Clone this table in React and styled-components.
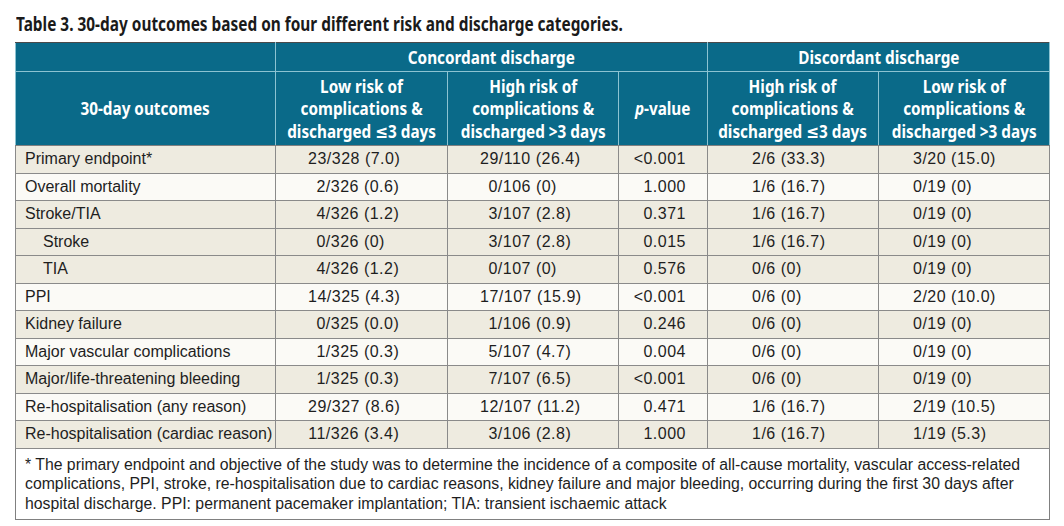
import React from 'react'
import styled, { createGlobalStyle } from 'styled-components'

const GlobalStyle = createGlobalStyle`
  body {
    margin: 0;
    background: #ffffff;
    font-family: 'Liberation Sans', Arial, sans-serif;
    color: #1e1e1e;
  }
`

const rows = [
  { label: 'Primary endpoint*', shade: true, c: ['23/328 (7.0)', '29/110 (26.4)', '<0.001', '2/6 (33.3)', '3/20 (15.0)'] },
  { label: 'Overall mortality', c: ['2/326 (0.6)', '0/106 (0)', '1.000', '1/6 (16.7)', '0/19 (0)'] },
  { label: 'Stroke/TIA', shade: true, c: ['4/326 (1.2)', '3/107 (2.8)', '0.371', '1/6 (16.7)', '0/19 (0)'] },
  { label: 'Stroke', indent: true, shade: true, c: ['0/326 (0)', '3/107 (2.8)', '0.015', '1/6 (16.7)', '0/19 (0)'] },
  { label: 'TIA', indent: true, shade: true, c: ['4/326 (1.2)', '0/107 (0)', '0.576', '0/6 (0)', '0/19 (0)'] },
  { label: 'PPI', c: ['14/325 (4.3)', '17/107 (15.9)', '<0.001', '0/6 (0)', '2/20 (10.0)'] },
  { label: 'Kidney failure', shade: true, c: ['0/325 (0.0)', '1/106 (0.9)', '0.246', '0/6 (0)', '0/19 (0)'] },
  { label: 'Major vascular complications', c: ['1/325 (0.3)', '5/107 (4.7)', '0.004', '0/6 (0)', '0/19 (0)'] },
  { label: 'Major/life-threatening bleeding', shade: true, c: ['1/325 (0.3)', '7/107 (6.5)', '<0.001', '0/6 (0)', '0/19 (0)'] },
  { label: 'Re-hospitalisation (any reason)', c: ['29/327 (8.6)', '12/107 (11.2)', '0.471', '1/6 (16.7)', '2/19 (10.5)'] },
  { label: 'Re-hospitalisation (cardiac reason)', shade: true, c: ['11/326 (3.4)', '3/106 (2.8)', '1.000', '1/6 (16.7)', '1/19 (5.3)'] },
]

const Count = ({ value }) => {
  const [num, rest] = value.split('/')
  return (
    <>
      <Num>{num}</Num>/{rest}
    </>
  )
}

const App = () => (
  <Page>
    <GlobalStyle />
    <Title>
      <TitleText>Table 3. 30-day outcomes based on four different risk and discharge categories.</TitleText>
    </Title>
    <Table>
      <colgroup>
        <col style={{ width: 260 }} />
        <col style={{ width: 172 }} />
        <col style={{ width: 171 }} />
        <col style={{ width: 89 }} />
        <col style={{ width: 171 }} />
        <col style={{ width: 171 }} />
      </colgroup>
      <thead>
        <tr>
          <GroupHead />
          <GroupHead colSpan={3}><HeadText>Concordant discharge</HeadText></GroupHead>
          <GroupHead colSpan={2}><HeadText>Discordant discharge</HeadText></GroupHead>
        </tr>
        <tr>
          <ColHead><HeadText>30-day outcomes</HeadText></ColHead>
          <ColHead><HeadText>Low risk of<br />complications &amp;<br />discharged ≤3 days</HeadText></ColHead>
          <ColHead><HeadText>High risk of<br />complications &amp;<br />discharged &gt;3 days</HeadText></ColHead>
          <ColHead><HeadText><i>p</i>-value</HeadText></ColHead>
          <ColHead><HeadText>High risk of<br />complications &amp;<br />discharged ≤3 days</HeadText></ColHead>
          <ColHead><HeadText>Low risk of<br />complications &amp;<br />discharged &gt;3 days</HeadText></ColHead>
        </tr>
      </thead>
      <tbody>
        {rows.map(r => (
          <Row key={r.label} $shade={r.shade}>
            <Label $indent={r.indent}>{r.label}</Label>
            <Cell $pad={32}><Count value={r.c[0]} /></Cell>
            <Cell $pad={32}><Count value={r.c[1]} /></Cell>
            <PCell>{r.c[2]}</PCell>
            <Cell $pad={44}>{r.c[3]}</Cell>
            <Cell $pad={34}>{r.c[4]}</Cell>
          </Row>
        ))}
        <tr>
          <Note colSpan={6}>
            <span>* The primary endpoint and objective of the study was to determine the incidence of a composite of all-cause mortality, vascular access-related</span>
            <span>complications, PPI, stroke, re-hospitalisation due to cardiac reasons, kidney failure and major bleeding, occurring during the first 30 days after</span>
            <span>hospital discharge. PPI: permanent pacemaker implantation; TIA: transient ischaemic attack</span>
          </Note>
        </tr>
      </tbody>
    </Table>
  </Page>
)

export default App

// no condensed face is installed, so the bold sans is squeezed horizontally
const condensed = `
  font-family: 'Noto Sans', 'DejaVu Sans', sans-serif;
  font-weight: bold;
`

const Page = styled.div`
  width: 1064px;
  height: 526px;
  padding: 14px 15px 0;
  box-sizing: border-box;
  overflow: hidden;
`

const Title = styled.h1`
  ${condensed}
  margin: 0 0 8px 1px;
  font-size: 19px;
  line-height: 20px;
  color: #1a1a1a;
  white-space: nowrap;
`

const TitleText = styled.span`
  display: inline-block;
  transform: scaleX(0.81);
  transform-origin: left center;
`

const Table = styled.table`
  width: 1034px;
  table-layout: fixed;
  border-collapse: collapse;
  border: 1px solid #808080;
`

const headCell = `
  ${condensed}
  color: #ffffff;
  background: #0a6a89;
  text-align: center;
  padding: 0;
  white-space: nowrap;
  border: 1px solid #8cc3d2;
`

const HeadText = styled.span`
  display: inline-block;
  margin: 0 -30px;
  transform: scaleX(0.85);
  transform-origin: center;
`

const GroupHead = styled.th`
  ${headCell}
  font-size: 18px;
  height: 28px;
  border-top: 1px solid #4a4a4a;
`

const ColHead = styled.th`
  ${headCell}
  font-size: 18px;
  line-height: 22.5px;
  height: 73px;
  border-bottom: 1px solid #808080;
`

const Row = styled.tr`
  background: ${p => (p.$shade ? '#eeebe0' : '#fbfaf6')};
`

const baseCell = `
  height: 26.5px;
  padding: 0;
  font-size: 16px;
  white-space: nowrap;
  border: 1px solid #8a8a8a;
`

const Label = styled.td`
  ${baseCell}
  padding-left: ${p => (p.$indent ? 27 : 9)}px;
`

const Cell = styled.td`
  ${baseCell}
  letter-spacing: 0.5px;
  padding-left: ${p => p.$pad}px;
`

const PCell = styled.td`
  ${baseCell}
  letter-spacing: 0.5px;
  text-align: right;
  padding-right: 21px;
`

const Num = styled.span`
  display: inline-block;
  min-width: 2ch;
  text-align: right;
`

const Note = styled.td`
  background: #ffffff;
  padding: 6px 9px;
  font-size: 15.8px;
  line-height: 19.5px;
  border: 1px solid #808080;
  span {
    display: block;
    white-space: nowrap;
  }
`
